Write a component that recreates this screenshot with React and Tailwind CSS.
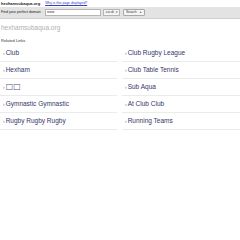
export default function App() {
  const left = ["Club", "Hexham", "□□", "Gymnastic Gymnastic", "Rugby Rugby Rugby"];
  const right = ["Club Rugby League", "Club Table Tennis", "Sub Aqua", "At Club Club", "Running Teams"];

  const Item = ({ label }) => (
    <div className="h-[17px] flex items-center pl-[3px] border-b border-[#ebebeb] text-[6.5px] leading-none text-[#35356a]">
      <span className="text-[5px] text-[#777] mr-[1px]">›</span>
      {label === "□□" ? <span className="text-[8px] font-['DejaVu_Sans',sans-serif] text-[#55557a]">{label}</span> : label}
    </div>
  );

  return (
    <div className="w-[240px] h-[240px] bg-white font-['Liberation_Sans',Arial,sans-serif] overflow-hidden">
      <div className="h-[7px] flex items-center gap-[5px] px-[1px]">
        <span className="text-[4px] font-bold text-[#222] leading-none">hexhamsubaqua.org</span>
        <span className="text-[3.4px] underline text-[#3344bb] leading-none">Why is this page displayed?</span>
      </div>

      <div className="h-[12px] bg-[#e3e3e3] border-b border-[#cfcfcf] flex items-center gap-[2px] px-[1px]">
        <span className="text-[3.6px] text-[#222] leading-none w-[42px]">Find your perfect domain</span>
        <div className="w-[56px] h-[7px] bg-white border border-[#b5b5b5] flex items-center px-[1px] text-[3.4px] leading-none text-[#333]">
          www
        </div>
        <div className="w-[17px] h-[7px] bg-[#f4f4f4] border border-[#b5b5b5] flex items-center justify-between px-[1px] text-[3.4px] leading-none text-[#333]">
          <span>.co.uk</span>
          <span className="text-[3px]">▾</span>
        </div>
        <div className="ml-[1px] w-[22px] h-[7px] bg-[#f4f4f4] border border-[#a8a8a8] rounded-[1px] flex items-center justify-between px-[2px] text-[3.4px] leading-none text-[#333]">
          <span>Search</span>
          <span className="text-[3px]">▸</span>
        </div>
      </div>

      <div className="px-[1px] pt-[4px] h-[14px] flex items-center text-[6.5px] leading-none text-[#b0b0b0]">
        hexhamsubaqua.org
      </div>

      <div className="px-[1px] pt-[5px] pb-[2px] h-[12px] flex items-center text-[4px] leading-none text-[#333]">
        Related Links
      </div>

      <div className="grid grid-cols-[117px_118px] gap-x-[5px]">
        <div className="flex flex-col">
          {left.map((l) => (
            <Item key={l} label={l} />
          ))}
        </div>
        <div className="flex flex-col">
          {right.map((l) => (
            <Item key={l} label={l} />
          ))}
        </div>
      </div>
    </div>
  );
}
